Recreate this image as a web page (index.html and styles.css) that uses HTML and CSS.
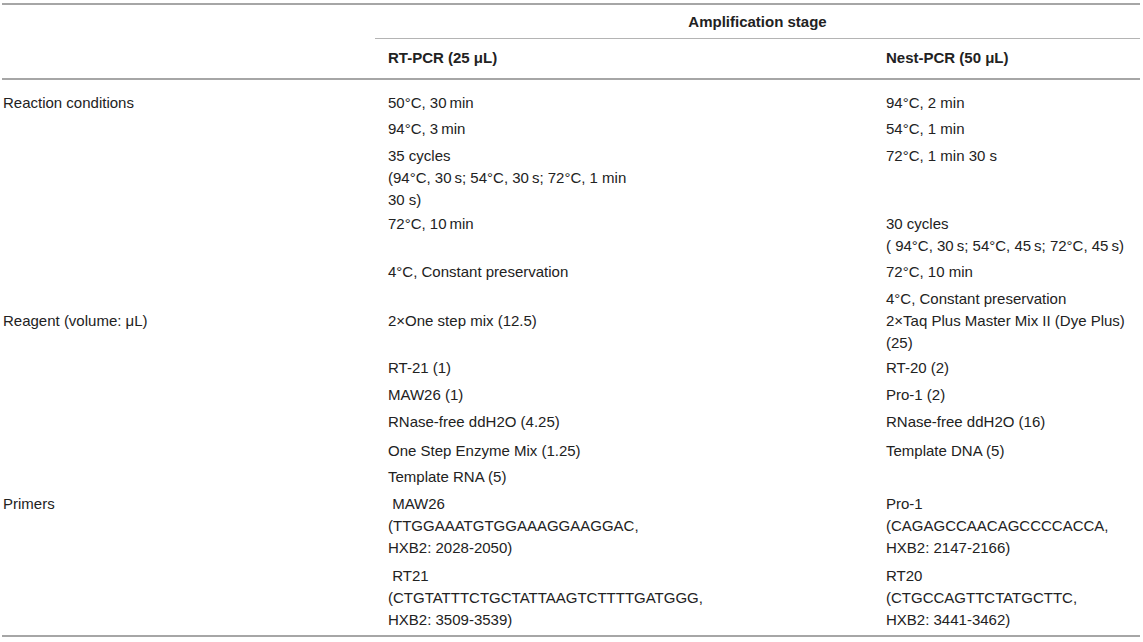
FILE: index.html
```html
<!DOCTYPE html>
<html lang="en">
<head>
<meta charset="utf-8">
<title>Amplification stage</title>
<link rel="stylesheet" href="styles.css">
</head>
<body>
<div class="frame">
<table class="tbl">
  <colgroup>
    <col class="c-label">
    <col class="c-rt">
    <col class="c-nest">
  </colgroup>
  <thead>
    <tr class="h1">
      <th class="lbl head-blank" rowspan="2"></th>
      <th class="span" colspan="2">Amplification stage</th>
    </tr>
    <tr class="h2">
      <th class="val">RT-PCR (25 μL)</th>
      <th class="val">Nest-PCR (50 μL)</th>
    </tr>
  </thead>
  <tbody>
    <tr class="first">
      <td class="lbl" rowspan="6">Reaction conditions</td>
      <td class="val">50°C, 30&#8201;min</td>
      <td class="val">94°C, 2 min</td>
    </tr>
    <tr class="g4">
      <td class="val">94°C, 3&#8201;min</td>
      <td class="val">54°C, 1 min</td>
    </tr>
    <tr class="g5">
      <td class="val">35 cycles<br>(94°C, 30&#8201;s; 54°C, 30&#8201;s; 72°C, 1 min<br>30 s)</td>
      <td class="val">72°C, 1 min 30 s</td>
    </tr>
    <tr class="g2">
      <td class="val">72°C, 10&#8201;min</td>
      <td class="val">30 cycles<br>( 94°C, 30&#8201;s; 54°C, 45&#8201;s; 72°C, 45&#8201;s)</td>
    </tr>
    <tr class="g4">
      <td class="val">4°C, Constant preservation</td>
      <td class="val">72°C, 10 min</td>
    </tr>
    <tr class="g5">
      <td class="val"></td>
      <td class="val">4°C, Constant preservation</td>
    </tr>
    <tr class="g0">
      <td class="lbl" rowspan="6">Reagent (volume: μL)</td>
      <td class="val">2×One step mix (12.5)</td>
      <td class="val">2×Taq Plus Master Mix II (Dye Plus)<br>(25)</td>
    </tr>
    <tr class="g3">
      <td class="val">RT-21 (1)</td>
      <td class="val">RT-20 (2)</td>
    </tr>
    <tr class="g5">
      <td class="val">MAW26 (1)</td>
      <td class="val">Pro-1 (2)</td>
    </tr>
    <tr class="g5">
      <td class="val">RNase-free ddH2O (4.25)</td>
      <td class="val">RNase-free ddH2O (16)</td>
    </tr>
    <tr class="g7">
      <td class="val">One Step Enzyme Mix (1.25)</td>
      <td class="val">Template DNA (5)</td>
    </tr>
    <tr class="g4">
      <td class="val">Template RNA (5)</td>
      <td class="val"></td>
    </tr>
    <tr class="g5">
      <td class="lbl" rowspan="2">Primers</td>
      <td class="val">&nbsp;MAW26<br>(TTGGAAATGTGGAAAGGAAGGAC,<br>HXB2: 2028-2050)</td>
      <td class="val">Pro-1<br>(CAGAGCCAACAGCCCCACCA,<br>HXB2: 2147-2166)</td>
    </tr>
    <tr class="g6 last">
      <td class="val">&nbsp;RT21<br>(CTGTATTTCTGCTATTAAGTCTTTTGATGGG,<br>HXB2: 3509-3539)</td>
      <td class="val">RT20<br>(CTGCCAGTTCTATGCTTC,<br>HXB2: 3441-3462)</td>
    </tr>
  </tbody>
</table>
</div>
</body>
</html>
```

FILE: styles.css
```css
html, body {
  margin: 0;
  padding: 0;
  background: #ffffff;
}

body {
  font-family: "Liberation Sans", Arial, Helvetica, sans-serif;
  font-size: 15px;
  line-height: 22px;
  color: #222222;
  padding-top: 3px;
}

.frame {
  width: 1138px;
  margin-left: 2px;
  border-top: 2px solid #a6a6a6;
  border-bottom: 2px solid #a6a6a6;
}

.tbl {
  width: 1138px;
  table-layout: fixed;
  border-collapse: separate;
  border-spacing: 0;
}

.c-label { width: 373px; }
.c-rt { width: 498px; }
.c-nest { width: 267px; }

.tbl th,
.tbl td {
  text-align: left;
  vertical-align: top;
  padding: 0 0 0 13px;
  font-weight: normal;
}

.tbl .lbl {
  padding-left: 1px;
}

.tbl th {
  font-weight: bold;
}

.h1 th {
  padding-top: 6px;
  padding-bottom: 5px;
}

.h1 .span {
  text-align: center;
  padding-left: 0;
  border-bottom: 1px solid #b4b4b4;
}

.h2 th {
  padding-top: 8px;
  padding-bottom: 9px;
  border-bottom: 2px solid #a6a6a6;
}

.tbl .head-blank {
  border-bottom: 2px solid #a6a6a6;
}

/* spacing above each body row */
.first td { padding-top: 12px; }
.g0 td { padding-top: 0; }
.g2 td { padding-top: 2px; }
.g3 td { padding-top: 3px; }
.g4 td { padding-top: 4px; }
.g5 td { padding-top: 5px; }
.g6 td { padding-top: 6px; }
.g7 td { padding-top: 7px; }

.last td {
  padding-bottom: 4px;
}
```
